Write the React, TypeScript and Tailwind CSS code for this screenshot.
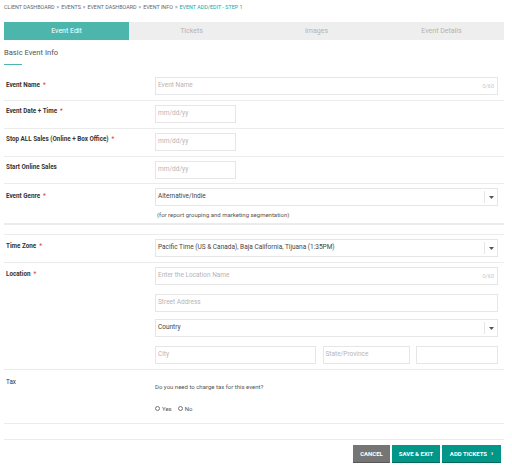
import { ReactNode } from 'react';

const crumbs = ['CLIENT DASHBOARD', 'EVENTS', 'EVENT DASHBOARD', 'EVENT INFO'];
const tabs = ['Event Edit', 'Tickets', 'Images', 'Event Details'];

function Label({ text, required = false, top }: { text: string; required?: boolean; top: string }) {
  return (
    <div className={`w-[151px] shrink-0 pl-[2px] text-[6.3px] leading-[10px] font-bold text-[#333] ${top}`}>
      {text}
      {required && <span className="ml-[3px] text-[#e53935] font-normal">*</span>}
    </div>
  );
}

function Field({ placeholder, className = '', counter = false }: { placeholder: string; className?: string; counter?: boolean }) {
  return (
    <div className={`h-[18px] border border-[#e6e6e6] flex items-center justify-between px-[2px] ${className}`}>
      <span className="text-[6.5px] text-[#b5b5b5]">{placeholder}</span>
      {counter && <span className="text-[5.5px] text-[#c8c8c8] pr-[1px]">0/60</span>}
    </div>
  );
}

function Select({ value, className = '' }: { value: string; className?: string }) {
  return (
    <div className={`h-[18px] border border-[#e6e6e6] flex items-center ${className}`}>
      <span className="flex-1 px-[2px] text-[6.5px] text-[#444]">{value}</span>
      <div className="h-[12px] w-px bg-[#e6e6e6]" />
      <div className="w-[12px] flex justify-center">
        <svg width="5" height="3" viewBox="0 0 5 3">
          <path d="M0 0h5L2.5 3z" fill="#555" />
        </svg>
      </div>
    </div>
  );
}

function Row({ children, className = '' }: { children: ReactNode; className?: string }) {
  return <div className={`flex border-b border-[#ececec] ${className}`}>{children}</div>;
}

function Radio({ text }: { text: string }) {
  return (
    <span className="flex items-center gap-[2px]">
      <span className="w-[5px] h-[5px] rounded-full border border-[#777]" />
      <span className="text-[6px] text-[#555]">{text}</span>
    </span>
  );
}

export default function App() {
  return (
    <div className="w-[512px] h-[473px] bg-white overflow-hidden" style={{ fontFamily: 'Roboto, sans-serif' }}>
      <div className="pl-[4px] pt-[4px] h-[22px] text-[5.4px] leading-[7px] text-[#666] flex gap-[2px]">
        {crumbs.map((c) => (
          <span key={c} className="flex gap-[2px]">
            <span>{c}</span>
            <span>»</span>
          </span>
        ))}
        <span className="text-[#26a69a]">EVENT ADD/EDIT - STEP 1</span>
      </div>

      <div className="mx-[4px] w-[500px] h-[18px] flex bg-[#eeeeee]">
        {tabs.map((t, i) => (
          <div
            key={t}
            className={`flex-1 flex items-center justify-center text-[7px] ${i === 0 ? 'bg-[#4db6ac] text-white' : 'text-[#b3b3b3]'}`}
          >
            {t}
          </div>
        ))}
      </div>

      <div className="pl-[4px] pt-[8px] text-[7.6px] leading-[10px] text-[#555]">Basic Event Info</div>
      <div className="ml-[4px] mt-[6px] w-[18px] h-px bg-[#4db6ac]" />

      <div className="mx-[4px] w-[500px] mt-[6px]">
        <Row className="pt-[6px] pb-[5px]">
          <Label text="Event Name" required top="mt-[3px]" />
          <Field placeholder="Event Name" counter className="w-[343px]" />
        </Row>
        <Row className="pt-[4px] pb-[5px]">
          <Label text="Event Date + Time" required top="mt-[1px]" />
          <Field placeholder="mm/dd/yy" className="w-[81px]" />
        </Row>
        <Row className="pt-[4px] pb-[5px]">
          <Label text="Stop ALL Sales (Online + Box Office)" required top="mt-[1px]" />
          <Field placeholder="mm/dd/yy" className="w-[81px]" />
        </Row>
        <Row className="pt-[4px] pb-[4px]">
          <Label text="Start Online Sales" top="mt-[1px]" />
          <Field placeholder="mm/dd/yy" className="w-[81px]" />
        </Row>
        <Row className="pt-[4px] pb-[4px] border-b-2">
          <Label text="Event Genre" required top="mt-[3px]" />
          <div className="flex flex-col">
            <Select value="Alternative/Indie" className="w-[343px]" />
            <div className="mt-[4px] h-[9px] text-[6px] leading-[9px] text-[#555] pl-[2px]">
              (for report grouping and marketing segmentation)
            </div>
          </div>
        </Row>
        <Row className="h-[10px]">
          <span />
        </Row>
        <Row className="pt-[4px] pb-[5px]">
          <Label text="Time Zone" required top="mt-[2px]" />
          <Select value="Pacific Time (US & Canada), Baja California, Tijuana (1:35PM)" className="w-[343px]" />
        </Row>
        <Row className="pt-[4px] pb-[5px]">
          <Label text="Location" required top="mt-[2px]" />
          <div className="flex flex-col w-[343px]">
            <Field placeholder="Enter the Location Name" counter />
            <Field placeholder="Street Address" className="mt-[9px]" />
            <Select value="Country" className="mt-[7px]" />
            <div className="mt-[9px] flex">
              <Field placeholder="City" className="w-[161px]" />
              <Field placeholder="State/Province" className="ml-[7px] w-[88px]" />
              <Field placeholder="" className="ml-[6px] w-[82px]" />
            </div>
          </div>
        </Row>
        <Row className="h-[54px]">
          <div className="w-[151px] shrink-0 pl-[2px] pt-[7px] text-[6.3px] leading-[10px] text-[#333]">Tax</div>
          <div className="flex flex-col">
            <div className="mt-[13px] text-[6px] leading-[8px] text-[#555]">Do you need to charge tax for this event?</div>
            <div className="mt-[13px] flex gap-[6px]">
              <Radio text="Yes" />
              <Radio text="No" />
            </div>
          </div>
        </Row>
        <Row className="h-[16px]">
          <span />
        </Row>
        <div className="mt-[5px] flex justify-end gap-[2px] pr-[3px]">
          <div className="w-[37px] h-[17px] bg-[#757575] text-white text-[6px] font-bold flex items-center justify-center shadow-[0_1px_0_#555]">CANCEL</div>
          <div className="w-[48px] h-[17px] bg-[#009688] text-white text-[6px] font-bold flex items-center justify-center shadow-[0_1px_0_#00695c]">SAVE &amp; EXIT</div>
          <div className="w-[59px] h-[17px] bg-[#009688] text-white text-[6px] font-bold flex items-center justify-center gap-[4px] shadow-[0_1px_0_#00695c]">
            ADD TICKETS <span className="text-[7px]">›</span>
          </div>
        </div>
      </div>
    </div>
  );
}
